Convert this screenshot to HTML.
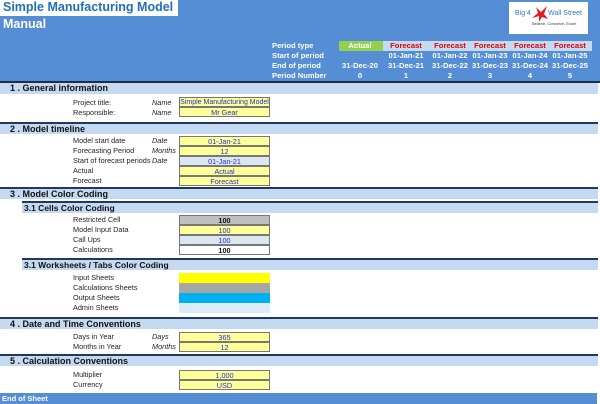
<!DOCTYPE html><html><head><style>
*{margin:0;padding:0;box-sizing:border-box}
body{width:600px;height:404px;background:#fff;position:relative;overflow:hidden;font-family:"Liberation Sans",Arial,sans-serif;font-size:7px}
div{position:absolute;white-space:nowrap}
.bar{left:0;width:598px;height:12px;background:#c5d9f1;border-top:2px solid #1f3864;font-weight:bold;font-size:9px;line-height:10px;padding-left:10px;color:#111}
.sub{left:22px;width:576px;padding-left:2px;font-size:8.5px}
.l{left:73px;font-size:7.3px;color:#222;line-height:10px}
.u{left:152px;font-style:italic;font-size:7.3px;color:#222;line-height:10px}
.b{left:179px;width:91px;height:10px;border:1px solid #777;background:#ffff99;color:#2233cc;text-align:center;line-height:9px;font-size:7.3px}
.h{color:#fff;font-weight:bold;font-size:7.6px;line-height:10px}
.c{text-align:center;width:40px}
.f{color:#e00000}
</style></head><body>
<div style="left:0;top:0;width:600px;height:81px;background:#558ed5"></div>
<div style="left:0;top:81px;width:600px;height:2px;background:#1f2e44"></div>
<div style="left:0;top:0;width:178px;height:16px;background:#fff;color:#1f6fb8;font-weight:bold;font-size:12.5px;line-height:15px;padding-left:3px">Simple Manufacturing Model</div>
<div style="left:3px;top:16px;color:#fff;font-weight:bold;font-size:12.5px;line-height:16px">Manual</div>
<div style="left:509px;top:2px;width:79px;height:32px;background:#fff"></div>
<div style="left:515px;top:10px;color:#3a78c0;font-size:7px">Big 4</div>
<div style="left:548px;top:10px;color:#3a78c0;font-size:7px">Wall Street</div>
<div style="left:532px;top:21px;color:#333;font-size:4px">Believe, Conceive, Excel</div>
<svg style="position:absolute;left:530px;top:4px" width="20" height="20" viewBox="0 0 20 20"><path d="M2 14 L8 9 L6 3 L11 8 L17 2 L14 10 L18 15 L12 13 L9 18 L9 12 Z" fill="#e02020"/></svg>
<div class="h" style="left:272px;top:41px">Period type</div>
<div class="h" style="left:272px;top:51px">Start of period</div>
<div class="h" style="left:272px;top:61px">End of period</div>
<div class="h" style="left:272px;top:71px">Period Number</div>
<div style="left:339px;top:41px;width:44px;height:10px;background:#92d050"></div>
<div style="left:383px;top:41px;width:209px;height:10px;background:#c5d9f1"></div>
<div class="h c" style="left:340px;top:41px">Actual</div>
<div class="h c" style="left:340px;top:61px">31-Dec-20</div>
<div class="h c" style="left:340px;top:71px">0</div>
<div class="h c f" style="left:386px;top:41px">Forecast</div><div class="h c" style="left:386px;top:51px">01-Jan-21</div><div class="h c" style="left:386px;top:61px">31-Dec-21</div><div class="h c" style="left:386px;top:71px">1</div>
<div class="h c f" style="left:430px;top:41px">Forecast</div><div class="h c" style="left:430px;top:51px">01-Jan-22</div><div class="h c" style="left:430px;top:61px">31-Dec-22</div><div class="h c" style="left:430px;top:71px">2</div>
<div class="h c f" style="left:470px;top:41px">Forecast</div><div class="h c" style="left:470px;top:51px">01-Jan-23</div><div class="h c" style="left:470px;top:61px">31-Dec-23</div><div class="h c" style="left:470px;top:71px">3</div>
<div class="h c f" style="left:510px;top:41px">Forecast</div><div class="h c" style="left:510px;top:51px">01-Jan-24</div><div class="h c" style="left:510px;top:61px">31-Dec-24</div><div class="h c" style="left:510px;top:71px">4</div>
<div class="h c f" style="left:550px;top:41px">Forecast</div><div class="h c" style="left:550px;top:51px">01-Jan-25</div><div class="h c" style="left:550px;top:61px">31-Dec-25</div><div class="h c" style="left:550px;top:71px">5</div>

<div class="bar" style="top:83px;border-top:0;height:11px">1 . General information</div>
<div class="l" style="top:98px">Project title:</div><div class="u" style="top:98px">Name</div><div class="b" style="top:97px;font-size:7px">Simple Manufacturing Model</div>
<div class="l" style="top:108px">Responsible:</div><div class="u" style="top:108px">Name</div><div class="b" style="top:107px">Mr Gear</div>

<div class="bar" style="top:122px">2 . Model timeline</div>
<div class="l" style="top:136px">Model start date</div><div class="u" style="top:136px">Date</div><div class="b" style="top:136px">01-Jan-21</div>
<div class="l" style="top:146px">Forecasting Period</div><div class="u" style="top:146px">Months</div><div class="b" style="top:146px">12</div>
<div class="l" style="top:156px">Start of forecast periods</div><div class="u" style="top:156px">Date</div><div class="b" style="top:156px;background:#dce6f1">01-Jan-21</div>
<div class="l" style="top:166px">Actual</div><div class="b" style="top:166px">Actual</div>
<div class="l" style="top:176px">Forecast</div><div class="b" style="top:176px">Forecast</div>

<div class="bar" style="top:187px">3 . Model Color Coding</div>
<div class="bar sub" style="top:201px">3.1 Cells Color Coding</div>
<div class="l" style="top:215px">Restricted Cell</div><div class="b" style="top:215px;background:#bfbfbf;color:#111;font-weight:bold">100</div>
<div class="l" style="top:225px">Model Input Data</div><div class="b" style="top:225px">100</div>
<div class="l" style="top:235px">Call Ups</div><div class="b" style="top:235px;background:#dce6f1">100</div>
<div class="l" style="top:245px">Calculations</div><div class="b" style="top:245px;background:#fff;color:#111;font-weight:bold">100</div>

<div class="bar sub" style="top:258px">3.1 Worksheets / Tabs Color Coding</div>
<div class="l" style="top:273px">Input Sheets</div><div style="left:179px;top:273px;width:91px;height:10px;background:#ffff00"></div>
<div class="l" style="top:283px">Calculations Sheets</div><div style="left:179px;top:283px;width:91px;height:10px;background:#a6a6a6"></div>
<div class="l" style="top:293px">Output Sheets</div><div style="left:179px;top:293px;width:91px;height:10px;background:#00b0f0"></div>
<div class="l" style="top:303px">Admin Sheets</div><div style="left:179px;top:303px;width:91px;height:10px;background:#ddebf7"></div>

<div class="bar" style="top:317px">4 . Date and Time Conventions</div>
<div class="l" style="top:332px">Days in Year</div><div class="u" style="top:332px">Days</div><div class="b" style="top:332px">365</div>
<div class="l" style="top:342px">Months in Year</div><div class="u" style="top:342px">Months</div><div class="b" style="top:342px">12</div>

<div class="bar" style="top:354px">5 . Calculation Conventions</div>
<div class="l" style="top:370px">Multiplier</div><div class="b" style="top:370px">1,000</div>
<div class="l" style="top:380px">Currency</div><div class="b" style="top:380px">USD</div>

<div style="left:0;top:393px;width:597px;height:11px;background:#558ed5;color:#fff;font-weight:bold;font-size:7.5px;line-height:11px;padding-left:2px">End of Sheet</div>
</body></html>
